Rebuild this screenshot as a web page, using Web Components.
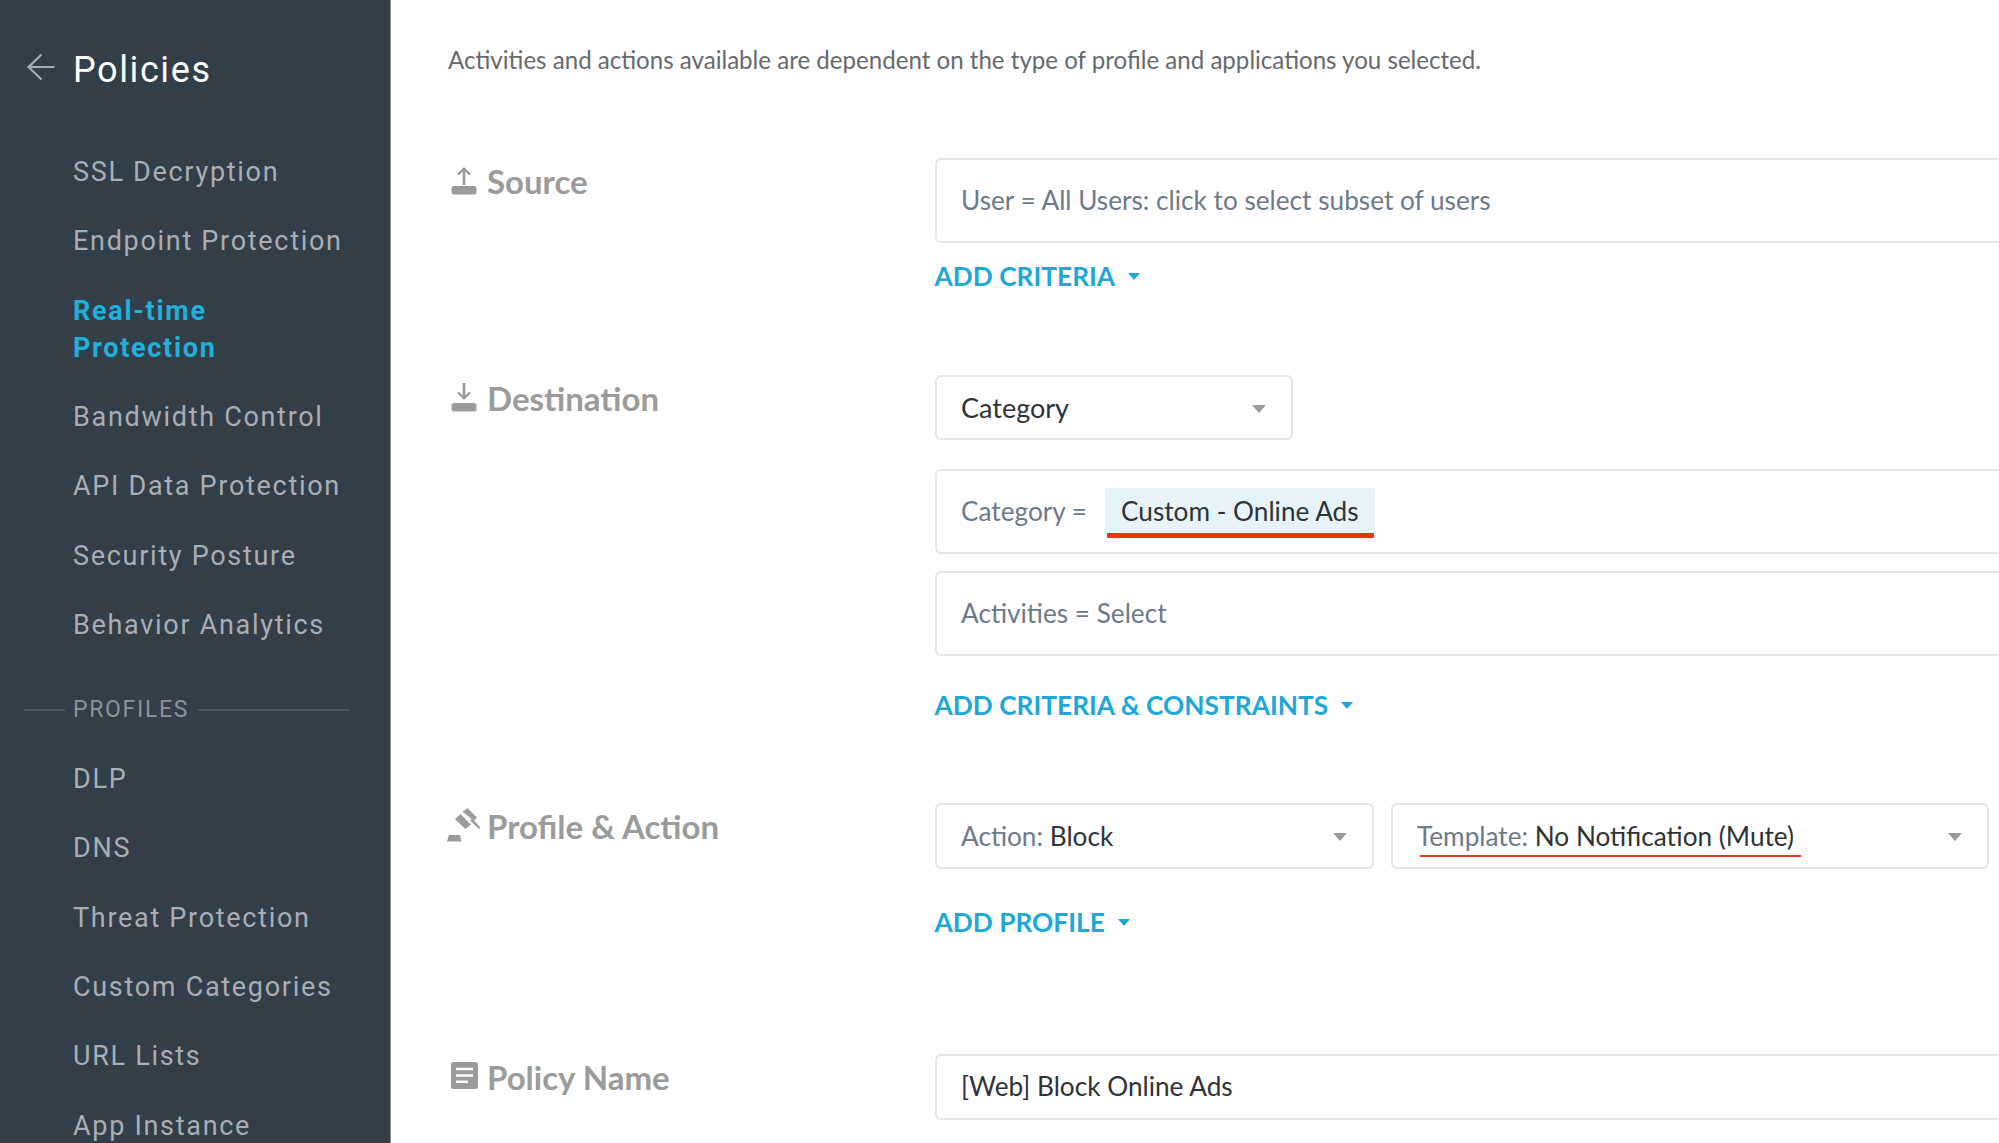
<!DOCTYPE html>
<html>
<head>
<meta charset="utf-8">
<title>Policies</title>
<style>
    html, body { margin: 0; height: 100%; overflow: hidden; background: #fff; }
    body { font-family: Lato, "Liberation Sans", sans-serif; }
</style>
</head>
<body>

<policy-page>
    <policy-sidebar slot="side" heading="Policies">
        <nav-item>SSL Decryption</nav-item>
        <nav-item>Endpoint Protection</nav-item>
        <nav-item active>Real-time Protection</nav-item>
        <nav-item>Bandwidth Control</nav-item>
        <nav-item>API Data Protection</nav-item>
        <nav-item>Security Posture</nav-item>
        <nav-item>Behavior Analytics</nav-item>
        <nav-divider>PROFILES</nav-divider>
        <nav-item>DLP</nav-item>
        <nav-item>DNS</nav-item>
        <nav-item>Threat Protection</nav-item>
        <nav-item>Custom Categories</nav-item>
        <nav-item>URL Lists</nav-item>
        <nav-item>App Instance</nav-item>
    </policy-sidebar>

    <intro-text>Activities and actions available are dependent on the type of profile and applications you selected.</intro-text>

    <form-row label="Source" icon="upload" style="margin-top:82px">
        <field-box>User = All Users: click to select subset of users</field-box>
        <add-link style="margin-top:20px">ADD CRITERIA</add-link>
    </form-row>

    <form-row label="Destination" icon="download" style="margin-top:86px">
        <select-box style="width:358px;height:65px;font-size:27px"><dark-text>Category</dark-text></select-box>
        <field-box style="margin-top:29px">Category = <name-chip>Custom - Online Ads</name-chip></field-box>
        <field-box style="margin-top:17px">Activities = Select</field-box>
        <add-link style="margin-top:36px">ADD CRITERIA &amp; CONSTRAINTS</add-link>
    </form-row>

    <form-row label="Profile &amp; Action" icon="gavel" style="margin-top:85px">
        <select-row>
            <select-box style="width:439px">Action: <dark-text>Block</dark-text></select-box>
            <select-box style="width:598px"><red-line>Template: <dark-text>No Notification (Mute)</dark-text></red-line></select-box>
        </select-row>
        <add-link style="margin-top:40px">ADD PROFILE</add-link>
    </form-row>

    <form-row label="Policy Name" icon="doc" style="margin-top:119px">
        <field-box style="height:66px"><dark-text>[Web] Block Online Ads</dark-text></field-box>
    </form-row>
</policy-page>

<script>
// page shell - sidebar slot on the left, the form flows on the right
var template_page = document.createElement("template");
template_page.innerHTML = `
<style>
    :host { display: flex; height: 1143px; overflow: hidden; }
    .side { flex: 0 0 391px; }
    .main { flex: 1; min-width: 0; overflow: hidden; padding: 44px 0 0 57px; }
</style>
<div class="side"><slot name="side"></slot></div>
<div class="main"><slot></slot></div>
`;
class PolicyPage extends HTMLElement {
    constructor(){
        super();
        this.attachShadow({mode:"open"});
    }
    connectedCallback(){
        this.shadowRoot.appendChild(template_page.content.cloneNode(true));
    }
}
customElements.define("policy-page", PolicyPage);

// dark sidebar
var template_sidebar = document.createElement("template");
template_sidebar.innerHTML = `
<style>
    :host {
        display: block;
        height: 1143px;
        overflow: hidden;
        box-sizing: border-box;
        background: #323e48;
        border-right: 1px solid #8c9298;
        padding-top: 45px;
        font-family: Roboto, "Liberation Sans", sans-serif;
    }
    .top { display: flex; align-items: center; height: 50px; padding-left: 27px; }
    .top svg { flex: none; width: 28px; height: 28px; margin-right: 18px; margin-top: -6px; }
    .title { font-size: 36px; line-height: 50px; color: #fff; letter-spacing: 1.6px; }
    .items { margin-top: 43px; }
</style>
<div class="top">
    <svg viewBox="0 0 28 28" fill="none" stroke="#a9adb1" stroke-width="2.2"><path d="M27.5 14H1.5M14.5 1.5L1.5 14L14.5 26.5"/></svg>
    <span class="title"></span>
</div>
<div class="items"><slot></slot></div>
`;
class PolicySidebar extends HTMLElement {
    constructor(){
        super();
        this.attachShadow({mode:"open"});
    }
    connectedCallback(){
        this.shadowRoot.appendChild(template_sidebar.content.cloneNode(true));
        this.shadowRoot.querySelector(".title").textContent = this.getAttribute("heading");
    }
}
customElements.define("policy-sidebar", PolicySidebar);

var template_navitem = document.createElement("template");
template_navitem.innerHTML = `
<style>
    :host {
        display: block;
        width: 275px;
        margin-left: 73px;
        padding: 16.15px 0;
        font-size: 27px;
        line-height: 37px;
        letter-spacing: 1.7px;
        color: #a9aeb3;
    }
    :host([active]) { color: #1fb0dc; font-weight: 700; }
</style>
<slot></slot>
`;
class NavItem extends HTMLElement {
    constructor(){
        super();
        this.attachShadow({mode:"open"});
    }
    connectedCallback(){
        this.shadowRoot.appendChild(template_navitem.content.cloneNode(true));
    }
}
customElements.define("nav-item", NavItem);

var template_navdivider = document.createElement("template");
template_navdivider.innerHTML = `
<style>
    :host {
        display: flex;
        align-items: center;
        margin: 32px 41px 17px 24px;
        height: 36px;
        font-size: 23px;
        letter-spacing: 1.7px;
        color: #8b9298;
    }
    .line { height: 2px; background: #4a555e; }
    .a { width: 41px; margin-right: 8px; }
    .b { flex: 1; margin-left: 9px; }
</style>
<div class="line a"></div><slot></slot><div class="line b"></div>
`;
class NavDivider extends HTMLElement {
    constructor(){
        super();
        this.attachShadow({mode:"open"});
    }
    connectedCallback(){
        this.shadowRoot.appendChild(template_navdivider.content.cloneNode(true));
    }
}
customElements.define("nav-divider", NavDivider);

var template_intro = document.createElement("template");
template_intro.innerHTML = `
<style>
    :host { display: block; font-size: 24.1px; line-height: 32px; color: #66696d; white-space: nowrap; }
</style>
<slot></slot>
`;
class IntroText extends HTMLElement {
    constructor(){
        super();
        this.attachShadow({mode:"open"});
    }
    connectedCallback(){
        this.shadowRoot.appendChild(template_intro.content.cloneNode(true));
    }
}
customElements.define("intro-text", IntroText);

// one form section: icon + label on the left, controls on the right
var row_icons = {
    upload: `<svg width="36" height="36" viewBox="0 0 36 36" fill="#9b9b9b"><path d="M16.7 23V9.500L12.800 13.400L11.200 11.800L18 5L24.800 11.800L23.200 13.400L19.300 9.500V23Z"/><rect x="5.500" y="24" width="25" height="8.500" rx="2.500"/></svg>`,
    download: `<svg width="36" height="36" viewBox="0 0 36 36" fill="#9b9b9b"><path d="M16.700 4V16.500L12.800 12.600L11.200 14.200L18 21L24.800 14.200L23.200 12.600L19.300 16.500V4Z"/><rect x="5.500" y="24" width="25" height="8.500" rx="2.500"/></svg>`,
    gavel: `<svg width="36" height="36" viewBox="0 0 36 36" fill="#9b9b9b"><path d="M1 34.500L3 28H14L15.500 34.500Z"/><path d="M16.500 4.800L21.500 1L31 10.500L28 13.800Z"/><path d="M9 12.300L14.500 7L24.800 17.500L19.500 22Z"/><path d="M24 13.500L26 11.500L34.500 20.500L33 22Z"/></svg>`,
    doc: `<svg width="36" height="36" viewBox="0 0 36 36"><rect x="5" y="4" width="27" height="27" rx="2.500" fill="#9b9b9b"/><path d="M10 11H27M10 17.500H27M10 23.700H22" stroke="#fff" stroke-width="2.500"/></svg>`
};
var template_row = document.createElement("template");
template_row.innerHTML = `
<style>
    :host { display: grid; grid-template-columns: 487px 1400px; }
    .label {
        display: flex;
        align-items: center;
        height: 46px;
        font-size: 33px;
        font-weight: 700;
        color: #9b9b9b;
        white-space: nowrap;
    }
    .icon { flex: none; width: 36px; height: 36px; margin-left: -2px; margin-right: 5px; margin-top: -2px; }
</style>
<div class="label"><span class="icon"></span><span class="text"></span></div>
<div><slot></slot></div>
`;
class FormRow extends HTMLElement {
    constructor(){
        super();
        this.attachShadow({mode:"open"});
    }
    connectedCallback(){
        this.shadowRoot.appendChild(template_row.content.cloneNode(true));
        this.shadowRoot.querySelector(".text").textContent = this.getAttribute("label");
        this.shadowRoot.querySelector(".icon").innerHTML = row_icons[this.getAttribute("icon")];
    }
}
customElements.define("form-row", FormRow);

var template_field = document.createElement("template");
template_field.innerHTML = `
<style>
    :host {
        display: flex;
        align-items: center;
        box-sizing: border-box;
        height: 85px;
        padding: 0 0 2px 24px;
        border: 2px solid #e6e6e6;
        border-radius: 6px;
        font-size: 26.2px;
        color: #6c7a8b;
        white-space: nowrap;
    }
</style>
<slot></slot>
`;
class FieldBox extends HTMLElement {
    constructor(){
        super();
        this.attachShadow({mode:"open"});
    }
    connectedCallback(){
        this.shadowRoot.appendChild(template_field.content.cloneNode(true));
    }
}
customElements.define("field-box", FieldBox);

var template_select = document.createElement("template");
template_select.innerHTML = `
<style>
    :host {
        display: flex;
        align-items: center;
        justify-content: space-between;
        box-sizing: border-box;
        height: 66px;
        padding: 0 25px 0 24px;
        border: 2px solid #e6e6e6;
        border-radius: 6px;
        font-size: 26.2px;
        color: #6c7a8b;
        white-space: nowrap;
    }
    .caret { flex: none; width: 0; height: 0; margin-top: 2px; border-style: solid; border-width: 8px 7px 0; border-color: #9b9b9b transparent transparent; }
</style>
<span class="txt"><slot></slot></span><span class="caret"></span>
`;
class SelectBox extends HTMLElement {
    constructor(){
        super();
        this.attachShadow({mode:"open"});
    }
    connectedCallback(){
        this.shadowRoot.appendChild(template_select.content.cloneNode(true));
    }
}
customElements.define("select-box", SelectBox);

var template_selectrow = document.createElement("template");
template_selectrow.innerHTML = `
<style>
    :host { display: flex; gap: 17px; }
</style>
<slot></slot>
`;
class SelectRow extends HTMLElement {
    constructor(){
        super();
        this.attachShadow({mode:"open"});
    }
    connectedCallback(){
        this.shadowRoot.appendChild(template_selectrow.content.cloneNode(true));
    }
}
customElements.define("select-row", SelectRow);

var template_link = document.createElement("template");
template_link.innerHTML = `
<style>
    :host {
        display: flex;
        align-items: center;
        height: 26px;
        margin-left: -0.5px;
        font-size: 26.3px;
        font-weight: 700;
        color: #1ea7d7;
    }
    .caret { width: 0; height: 0; margin-left: 13px; border-style: solid; border-width: 7px 6px 0; border-color: #1ea7d7 transparent transparent; }
</style>
<slot></slot><span class="caret"></span>
`;
class AddLink extends HTMLElement {
    constructor(){
        super();
        this.attachShadow({mode:"open"});
    }
    connectedCallback(){
        this.shadowRoot.appendChild(template_link.content.cloneNode(true));
    }
}
customElements.define("add-link", AddLink);

var template_dark = document.createElement("template");
template_dark.innerHTML = `
<style>
    :host { display: inline; color: #2f3336; }
</style>
<slot></slot>
`;
class DarkText extends HTMLElement {
    constructor(){
        super();
        this.attachShadow({mode:"open"});
    }
    connectedCallback(){
        this.shadowRoot.appendChild(template_dark.content.cloneNode(true));
    }
}
customElements.define("dark-text", DarkText);

// selected value chip with the red marker line laid over its bottom edge
var template_chip = document.createElement("template");
template_chip.innerHTML = `
<style>
    :host {
        position: relative;
        display: inline-flex;
        align-items: center;
        height: 50px;
        margin-left: 18px;
        margin-top: 4px;
        padding: 0 16px 4px;
        box-sizing: border-box;
        background: #e6f4fa;
        border-radius: 2px;
        color: #2f3336;
    }
    .mark { position: absolute; left: 2px; right: 1px; bottom: 0; height: 5px; background: #f5300f; border-radius: 1px; }
</style>
<slot></slot><span class="mark"></span>
`;
class NameChip extends HTMLElement {
    constructor(){
        super();
        this.attachShadow({mode:"open"});
    }
    connectedCallback(){
        this.shadowRoot.appendChild(template_chip.content.cloneNode(true));
    }
}
customElements.define("name-chip", NameChip);

var template_redline = document.createElement("template");
template_redline.innerHTML = `
<style>
    :host { position: relative; display: inline-block; }
    .mark { position: absolute; left: 3px; right: -7px; bottom: -5px; height: 2px; background: #e8391d; }
</style>
<slot></slot><span class="mark"></span>
`;
class RedLine extends HTMLElement {
    constructor(){
        super();
        this.attachShadow({mode:"open"});
    }
    connectedCallback(){
        this.shadowRoot.appendChild(template_redline.content.cloneNode(true));
    }
}
customElements.define("red-line", RedLine);
</script>
</body>
</html>
